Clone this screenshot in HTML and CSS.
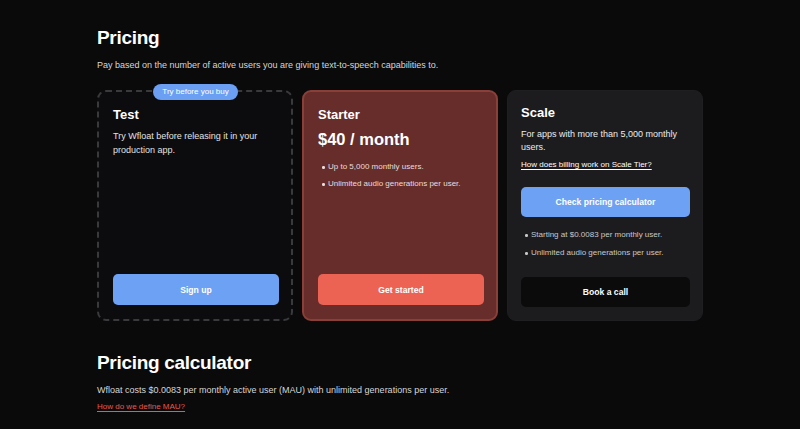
FILE: index.html
```html
<!DOCTYPE html>
<html>
<head>
<meta charset="utf-8">
<link rel="stylesheet" href="styles.css">
</head>
<body>
<main class="page">
  <h1 class="title">Pricing</h1>
  <p class="lead">Pay based on the number of active users you are giving text-to-speech capabilities to.</p>

  <section class="plans">
    <div class="card card-test">
      <span class="badge">Try before you buy</span>
      <h2 class="plan-name">Test</h2>
      <p class="desc">Try Wfloat before releasing it in your production app.</p>
      <button class="btn btn-blue btn-bottom">Sign up</button>
    </div>

    <div class="card card-starter">
      <h2 class="plan-name">Starter</h2>
      <div class="price">$40 / month</div>
      <ul class="bullets">
        <li>Up to 5,000 monthly users.</li>
        <li>Unlimited audio generations per user.</li>
      </ul>
      <button class="btn btn-red btn-bottom">Get started</button>
    </div>

    <div class="card card-scale">
      <h2 class="plan-name">Scale</h2>
      <p class="desc desc-scale">For apps with more than 5,000 monthly users.</p>
      <a class="link-white" href="#">How does billing work on Scale Tier?</a>
      <button class="btn btn-blue btn-calc">Check pricing calculator</button>
      <ul class="bullets bullets-grey">
        <li>Starting at $0.0083 per monthly user.</li>
        <li>Unlimited audio generations per user.</li>
      </ul>
      <button class="btn btn-dark">Book a call</button>
    </div>
  </section>

  <h1 class="title title-calc">Pricing calculator</h1>
  <p class="lead lead-calc">Wfloat costs $0.0083 per monthly active user (MAU) with unlimited generations per user.</p>
  <a class="link-red" href="#">How do we define MAU?</a>
</main>
</body>
</html>
```

FILE: styles.css
```css
* { box-sizing: border-box; }
html, body {
  margin: 0;
  padding: 0;
  background: #0a0a0b;
  color: #fff;
  font-family: "Liberation Sans", Arial, sans-serif;
}
.page {
  width: 606px;
  margin-left: 97px;
  padding-top: 25px;
}
.title {
  margin: 0;
  font-size: 19px;
  line-height: 26px;
  font-weight: 700;
  letter-spacing: -0.3px;
}
.lead {
  margin: 8px 0 0;
  font-size: 9px;
  line-height: 12px;
  color: #d6d6d6;
}
.plans {
  margin-top: 19px;
  display: grid;
  grid-template-columns: 196px 196px 196px;
  column-gap: 9px;
  align-items: stretch;
}
.card {
  position: relative;
  border-radius: 9px;
  display: flex;
  flex-direction: column;
  min-height: 231px;
}
.card-test {
  border: 2px dashed #3a3a3d;
  background: #0c0c0e;
  padding: 14px 13px 14px 14px;
}
.card-starter {
  border: 2px solid #8a3f38;
  background: #672d2a;
  padding: 14px 13px 14px 14px;
}
.card-scale {
  border: 1px solid #1f1f22;
  background: #1c1c1f;
  padding: 13px 12px 13px 13px;
}
.badge {
  position: absolute;
  top: -8px;
  left: 54px;
  width: 85px;
  height: 16px;
  border-radius: 8px;
  background: #6b9ff3;
  color: #fff;
  font-size: 8px;
  line-height: 16px;
  text-align: center;
}
.plan-name {
  margin: 0;
  font-size: 13px;
  line-height: 18px;
  font-weight: 700;
}
.desc {
  margin: 5px 0 0;
  font-size: 9px;
  line-height: 14px;
  color: #e2e2e2;
}
.desc-scale {
  margin-top: 6px;
  line-height: 13px;
  color: #ececec;
}
.price {
  margin-top: 4px;
  font-size: 16.5px;
  line-height: 22px;
  font-weight: 700;
}
.bullets {
  margin: 12px 0 0;
  padding: 0;
  list-style: none;
  font-size: 8px;
  line-height: 10px;
  color: #eadcdc;
}
.bullets li {
  position: relative;
  padding-left: 10px;
  margin-bottom: 7px;
}
.bullets li:last-child { margin-bottom: 0; }
.bullets li::before {
  content: "";
  position: absolute;
  left: 4px;
  top: 4px;
  width: 2.5px;
  height: 2.5px;
  border-radius: 50%;
  background: currentColor;
}
.bullets-grey {
  color: #c8c8c8;
  margin-top: 13px;
}
.bullets-grey li { margin-bottom: 8px; }
.link-white {
  align-self: flex-start;
  margin-top: 5px;
  font-size: 8px;
  line-height: 12px;
  color: #fff;
  text-decoration: underline;
  text-underline-offset: 2px;
}
.btn {
  display: block;
  width: 100%;
  height: 30px;
  border: none;
  border-radius: 5px;
  font-family: inherit;
  font-size: 8.6px;
  font-weight: 700;
  color: #fff;
  cursor: pointer;
  padding: 0;
}
.btn-bottom { margin-top: auto; width: 166px; height: 31px; }
.btn-blue { background: #6da1f4; }
.btn-red { background: #ec6354; }
.btn-calc { margin-top: 16px; width: 169px; }
.btn-dark { background: #0b0b0c; margin-top: 19px; width: 169px; }
.title-calc { margin-top: 29px; }
.lead-calc { margin-top: 8px; }
.link-red {
  display: block;
  width: fit-content;
  margin-top: 5px;
  font-size: 8px;
  line-height: 12px;
  color: #e8584c;
  text-decoration: underline;
  text-underline-offset: 2px;
}
```
